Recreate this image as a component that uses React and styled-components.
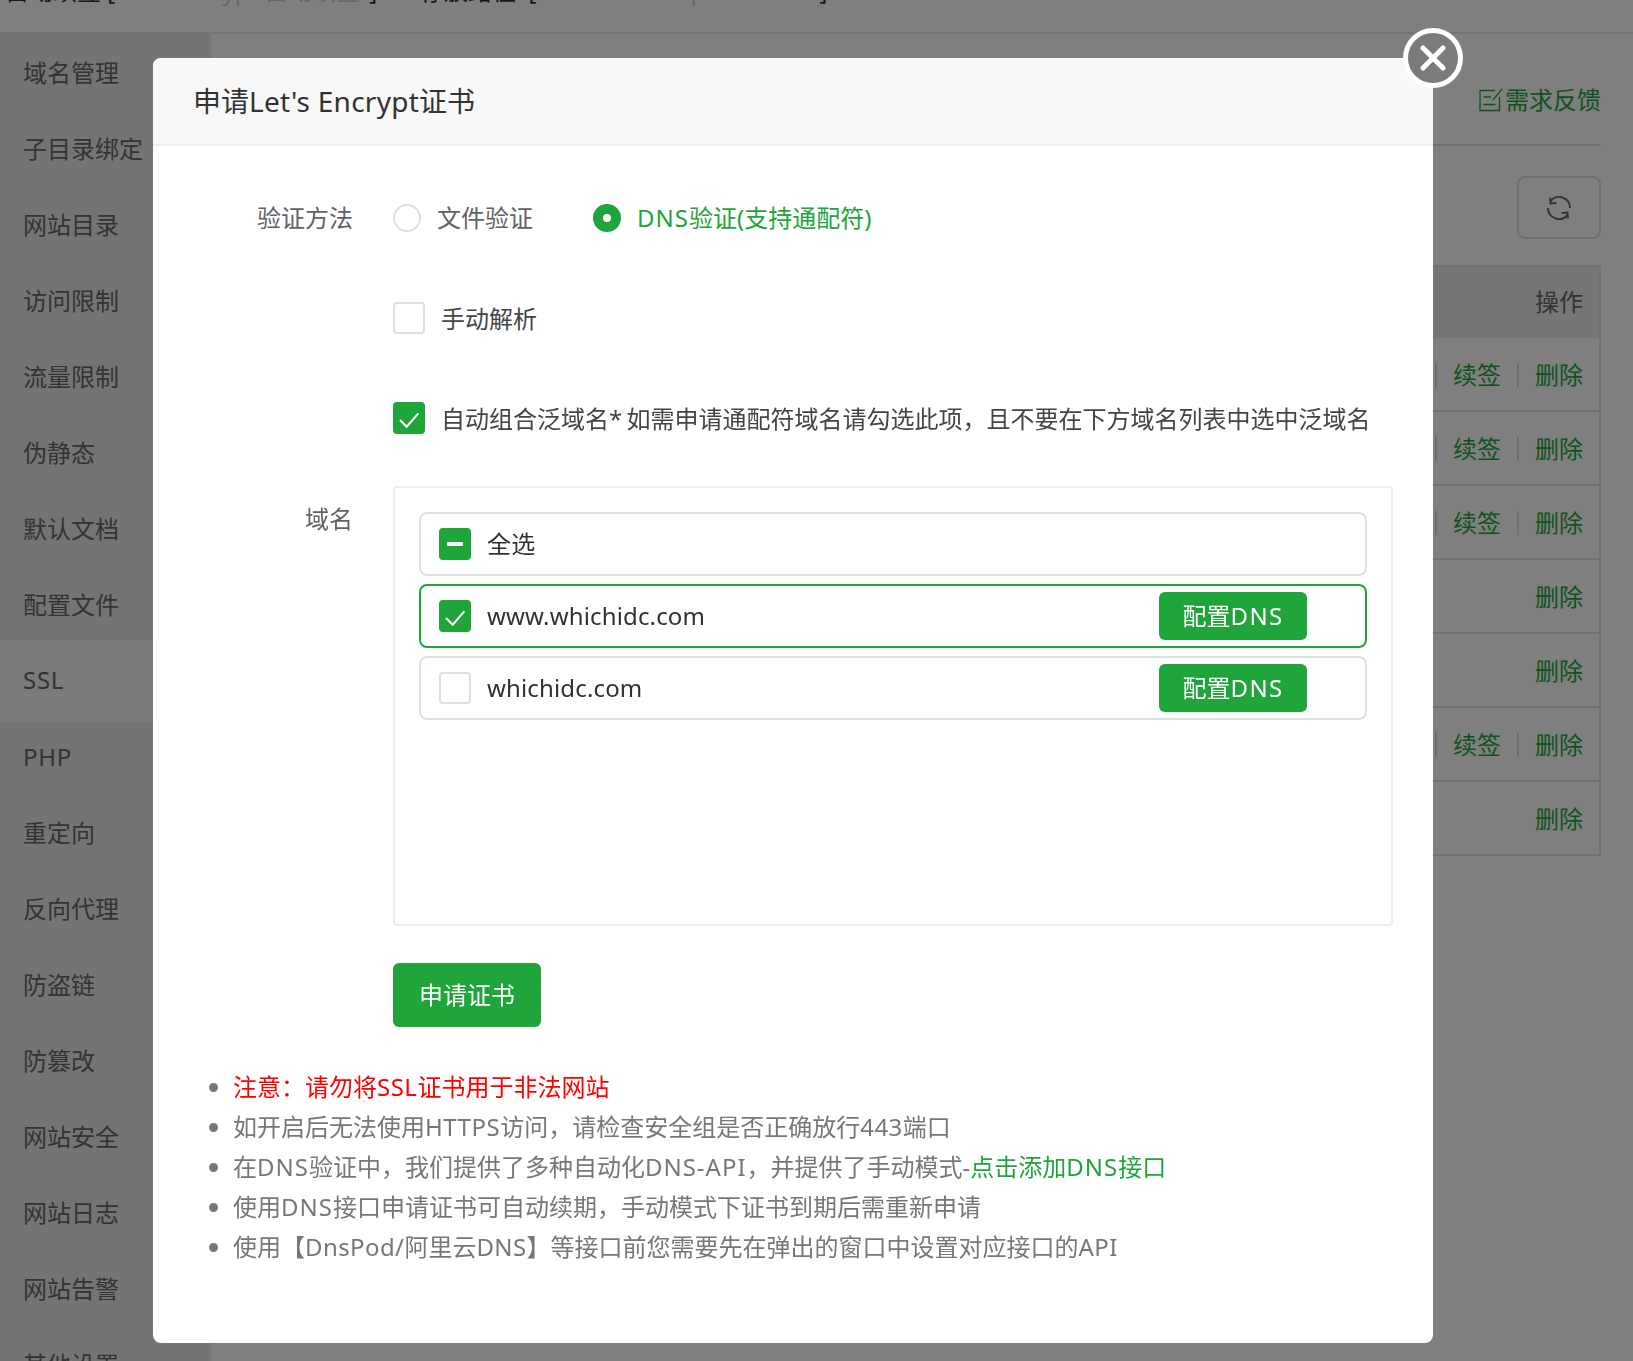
import React from 'react';
import styled, { createGlobalStyle } from 'styled-components';

const green = '#20a53a';
const fonts = '"Noto Sans", "Noto Sans CJK SC", sans-serif';

const menu = [
  '域名管理', '子目录绑定', '网站目录', '访问限制', '流量限制', '伪静态',
  '默认文档', '配置文件', 'SSL', 'PHP', '重定向', '反向代理', '防盗链',
  '防篡改', '网站安全', '网站日志', '网站告警', '其他设置',
];

// true means the row also has a renew link
const certRows = [true, true, true, false, false, true, false];

const GlobalStyle = createGlobalStyle`
  html, body {
    margin: 0;
    padding: 0;
    height: 100%;
    overflow: hidden;
    font-family: ${fonts};
    background: #fff;
  }
  * { box-sizing: border-box; }
`;

const Page = styled.div`
  width: 1633px;
  height: 1361px;
  overflow: hidden;
  display: flex;
  flex-direction: column;
  color: #666;
  font-size: 24px;
  line-height: 32px;
`;

const TopBar = styled.div`
  height: 32px;
  flex-shrink: 0;
  display: flex;
  align-items: flex-end;
  gap: 43px;
  padding: 0 0 23px 5px;
  overflow: hidden;
  white-space: nowrap;
  line-height: 36px;
  color: #333;
`;

const Faint = styled.span`
  display: inline-block;
  width: ${(p) => p.$width}px;
  color: #ccc;
`;

const Main = styled.div`
  flex: 1;
  display: flex;
  min-height: 0;
`;

const Sidebar = styled.nav`
  width: 211px;
  flex-shrink: 0;
  padding-top: 2px;
  background: #e9e9e9;
`;

const SideItem = styled.div`
  height: ${(p) => (p.$active ? 81 : 76)}px;
  margin: ${(p) => (p.$active ? '-2px 0 -3px' : '0')};
  line-height: ${(p) => (p.$active ? 80 : 78)}px;
  padding-left: 23px;
  white-space: nowrap;
  background: ${(p) => (p.$active ? '#f5f5f5' : 'transparent')};
`;

const Content = styled.div`
  flex: 1;
  padding: 0 32px 0 20px;
  border-top: 2px solid #e6e6e6;
`;

const FeedbackBar = styled.div`
  height: 112px;
  padding-top: 42px;
  display: flex;
  justify-content: flex-end;
  border-bottom: 2px solid #e2e2ea;
`;

const FeedbackLink = styled.a`
  height: 48px;
  display: flex;
  align-items: center;
  gap: 2px;
  line-height: 48px;
  color: ${green};
`;

const Toolbar = styled.div`
  margin: 30px 0 26px;
  display: flex;
  justify-content: flex-end;
`;

const RefreshButton = styled.button`
  width: 84px;
  height: 63px;
  padding: 0;
  display: flex;
  align-items: center;
  justify-content: center;
  background: transparent;
  border: 2px solid #dcdfe6;
  border-radius: 8px;
  color: #666;
`;

const Table = styled.div`
  border: 2px solid #e2e2ea;
  border-bottom-width: 0;
`;

const HeadRow = styled.div`
  height: 71px;
  padding: 0 16px 2px 0;
  display: flex;
  align-items: center;
  justify-content: flex-end;
  background: #ededed;
`;

const BodyRow = styled.div`
  height: 74px;
  padding: 2px 16px 0 0;
  display: flex;
  align-items: center;
  justify-content: flex-end;
  gap: 16px;
  border-bottom: 2px solid #e2e2ea;
`;

const ActionLink = styled.a`
  color: ${green};
`;

const Separator = styled.i`
  width: 2px;
  height: 24px;
  background: #ddd;
`;

const Backdrop = styled.div`
  position: fixed;
  inset: 0;
  background: rgba(0, 0, 0, 0.5);
`;

const Modal = styled.div`
  position: absolute;
  top: 58px;
  left: 153px;
  width: 1280px;
  height: 1285px;
  background: #fff;
  border-radius: 8px;
`;

const CloseButton = styled.button`
  position: absolute;
  top: -30px;
  right: -30px;
  width: 60px;
  height: 60px;
  padding: 0;
  display: flex;
  align-items: center;
  justify-content: center;
  background: #7b7b7b;
  border: 5px solid #fff;
  border-radius: 50%;
`;

const ModalHeader = styled.header`
  height: 88px;
  padding-left: 40px;
  background: #f8f8f8;
  border-bottom: 2px solid #eee;
  border-radius: 8px 8px 0 0;
  line-height: 86px;
  font-size: 28px;
  color: #333;
`;

const ModalBody = styled.div`
  padding-top: 48px;
`;

const FormRow = styled.div`
  display: flex;
  gap: 40px;
  margin-bottom: ${(p) => p.$gap}px;
`;

const FormLabel = styled.div`
  width: 200px;
  flex-shrink: 0;
  height: 48px;
  line-height: ${(p) => (p.$top ? '24px' : '48px')};
  padding-top: ${(p) => (p.$top ? '21px' : '0')};
  box-sizing: content-box;
  text-align: right;
  color: #606266;
`;

const Field = styled.div`
  height: 48px;
  display: flex;
  align-items: center;
`;

const RadioOption = styled.label`
  display: flex;
  align-items: center;
  gap: 16px;
  margin-right: 60px;
  color: ${(p) => (p.$checked ? green : '#606266')};
`;

const RadioDot = styled.span`
  width: 28px;
  height: 28px;
  display: flex;
  align-items: center;
  justify-content: center;
  border-radius: 50%;
  border: 2px solid ${(p) => (p.$checked ? green : '#dcdfe6')};
  background: ${(p) => (p.$checked ? green : '#fff')};

  &::after {
    content: '';
    width: 8px;
    height: 8px;
    border-radius: 50%;
    background: ${(p) => (p.$checked ? '#fff' : 'transparent')};
  }
`;

const CheckBox = styled.span`
  width: 32px;
  height: 32px;
  flex-shrink: 0;
  display: flex;
  align-items: center;
  justify-content: center;
  border-radius: 4px;
  border: 2px solid ${(p) => (p.$on ? green : '#dcdfe6')};
  background: ${(p) => (p.$on ? green : '#fff')};
`;

const MinusBar = styled.span`
  width: 16px;
  height: 4px;
  border-radius: 1px;
  background: #fff;
`;

const CheckLabel = styled.label`
  display: flex;
  align-items: center;
  gap: 16px;
  color: #444;
  white-space: nowrap;
`;

const CheckText = styled.span`
  padding-top: 2px;
`;

const DomainBox = styled.div`
  width: 1000px;
  height: 440px;
  padding: 24px;
  display: flex;
  flex-direction: column;
  gap: 8px;
  border: 2px solid #ebeef5;
  border-radius: 4px;
`;

const DomainRow = styled.div`
  height: 64px;
  padding: 0 58px 0 18px;
  display: flex;
  align-items: center;
  gap: 16px;
  border: 2px solid ${(p) => (p.$on ? green : '#dcdfe6')};
  border-radius: 8px;
  color: #303133;
`;

const DomainName = styled.span`
  flex: 1;
  letter-spacing: 0.15px;
`;

const GreenButton = styled.button`
  width: 148px;
  height: ${(p) => p.$height}px;
  padding: 0;
  border: 0;
  border-radius: 6px;
  background: ${green};
  color: #fff;
  font-family: inherit;
  font-size: 24px;
  line-height: 32px;
`;

const SubmitRow = styled.div`
  margin: 37px 0 40px 240px;
`;

const Notes = styled.ul`
  margin: 0;
  padding: 0 0 0 80px;
  color: #777;
`;

const Note = styled.li`
  height: 40px;
  line-height: 40px;
  white-space: nowrap;
  color: ${(p) => (p.$alert ? '#f00' : 'inherit')};

  &::marker {
    color: #777;
  }
`;

const NoteLink = styled.a`
  color: ${green};
`;

// Latin runs need a little tracking to reach the widths of the original font
const Latin = styled.span`
  letter-spacing: ${(p) => p.$track ?? 1}px;
`;

const TickIcon = () => (
  <svg width="22" height="22" viewBox="0 0 22 22" fill="none" stroke="#fff" strokeWidth="2">
    <path d="M2 13l6.7 6.7L20.3 6.3" />
  </svg>
);

const CloseIcon = () => (
  <svg width="26" height="26" viewBox="0 0 26 26" fill="none" stroke="#fff" strokeWidth="5" strokeLinecap="round">
    <path d="M3 3l20 20M23 3L3 23" />
  </svg>
);

const FeedbackIcon = () => (
  <svg width="24" height="24" viewBox="0 0 24 24" fill="none" stroke="currentColor" strokeWidth="1.3">
    <path d="M16 2.5H1v20h19.5V9M4.5 9h7.5M4.5 16.5h12M14 12L23 1" />
  </svg>
);

const RefreshIcon = () => (
  <svg width="24" height="24" viewBox="0 0 24 24" fill="none" stroke="currentColor" strokeWidth="2">
    <path d="M3.5 5A11 11 0 0 1 23 12M3 1.5l.5 6 6-.5M1 12a11 11 0 0 0 19.5 7M21 22.5l-.5-6-6 .5" />
  </svg>
);

const App = () => (
  <>
    <GlobalStyle />
    <Page>
      <TopBar>
        <span>自动续签 [<Faint $width={254}>Let's Encrypt 自动续签</Faint>]</span>
        <span>存放路径&nbsp;&nbsp;[<Faint $width={283}>/www/server/panel</Faint>]</span>
      </TopBar>
      <Main>
        <Sidebar>
          {menu.map((item) => (
            <SideItem key={item} $active={item === 'SSL'}>
              {/^[A-Z]+$/.test(item) ? <Latin $track={0.7}>{item}</Latin> : item}
            </SideItem>
          ))}
        </Sidebar>
        <Content>
          <FeedbackBar>
            <FeedbackLink><FeedbackIcon />需求反馈</FeedbackLink>
          </FeedbackBar>
          <Toolbar>
            <RefreshButton><RefreshIcon /></RefreshButton>
          </Toolbar>
          <Table>
            <HeadRow>操作</HeadRow>
            {certRows.map((renew, i) => (
              <BodyRow key={i}>
                {renew && <Separator />}
                {renew && <ActionLink>续签</ActionLink>}
                {renew && <Separator />}
                <ActionLink>删除</ActionLink>
              </BodyRow>
            ))}
          </Table>
        </Content>
      </Main>

      <Backdrop>
        <Modal>
          <CloseButton><CloseIcon /></CloseButton>
          <ModalHeader>申请<Latin $track={0.25}>Let's Encrypt</Latin>证书</ModalHeader>
          <ModalBody>
            <FormRow $gap={52}>
              <FormLabel>验证方法</FormLabel>
              <Field>
                <RadioOption><RadioDot />文件验证</RadioOption>
                <RadioOption $checked>
                  <RadioDot $checked />
                  <span><Latin>DNS</Latin>验证(支持通配符)</span>
                </RadioOption>
              </Field>
            </FormRow>
            <FormRow $gap={52}>
              <FormLabel />
              <Field>
                <CheckLabel><CheckBox /><CheckText>手动解析</CheckText></CheckLabel>
              </Field>
            </FormRow>
            <FormRow $gap={44}>
              <FormLabel />
              <Field>
                <CheckLabel>
                  <CheckBox $on><TickIcon /></CheckBox>
                  <CheckText>自动组合泛域名<Latin $track={-1}>* </Latin>如需申请通配符域名请勾选此项，且不要在下方域名列表中选中泛域名</CheckText>
                </CheckLabel>
              </Field>
            </FormRow>
            <FormRow $gap={0}>
              <FormLabel $top>域名</FormLabel>
              <DomainBox>
                <DomainRow>
                  <CheckBox $on><MinusBar /></CheckBox>
                  <DomainName>全选</DomainName>
                </DomainRow>
                <DomainRow $on>
                  <CheckBox $on><TickIcon /></CheckBox>
                  <DomainName>www.whichidc.com</DomainName>
                  <GreenButton $height={48}>配置<Latin $track={1.3}>DNS</Latin></GreenButton>
                </DomainRow>
                <DomainRow>
                  <CheckBox />
                  <DomainName>whichidc.com</DomainName>
                  <GreenButton $height={48}>配置<Latin $track={1.3}>DNS</Latin></GreenButton>
                </DomainRow>
              </DomainBox>
            </FormRow>
            <SubmitRow>
              <GreenButton $height={64}>申请证书</GreenButton>
            </SubmitRow>
            <Notes>
              <Note $alert>注意：请勿将<Latin $track={0.5}>SSL</Latin>证书用于非法网站</Note>
              <Note>如开启后无法使用<Latin $track={0.5}>HTTPS</Latin>访问，请检查安全组是否正确放行<Latin $track={0.5}>443</Latin>端口</Note>
              <Note>
                在<Latin>DNS</Latin>验证中，我们提供了多种自动化<Latin>DNS-API</Latin>，并提供了手动模式-
                <NoteLink>点击添加<Latin>DNS</Latin>接口</NoteLink>
              </Note>
              <Note>使用<Latin>DNS</Latin>接口申请证书可自动续期，手动模式下证书到期后需重新申请</Note>
              <Note>使用【<Latin $track={0.4}>DnsPod/</Latin>阿里云<Latin $track={0.4}>DNS</Latin>】等接口前您需要先在弹出的窗口中设置对应接口的<Latin $track={0.4}>API</Latin></Note>
            </Notes>
          </ModalBody>
        </Modal>
      </Backdrop>
    </Page>
  </>
);

export default App;
